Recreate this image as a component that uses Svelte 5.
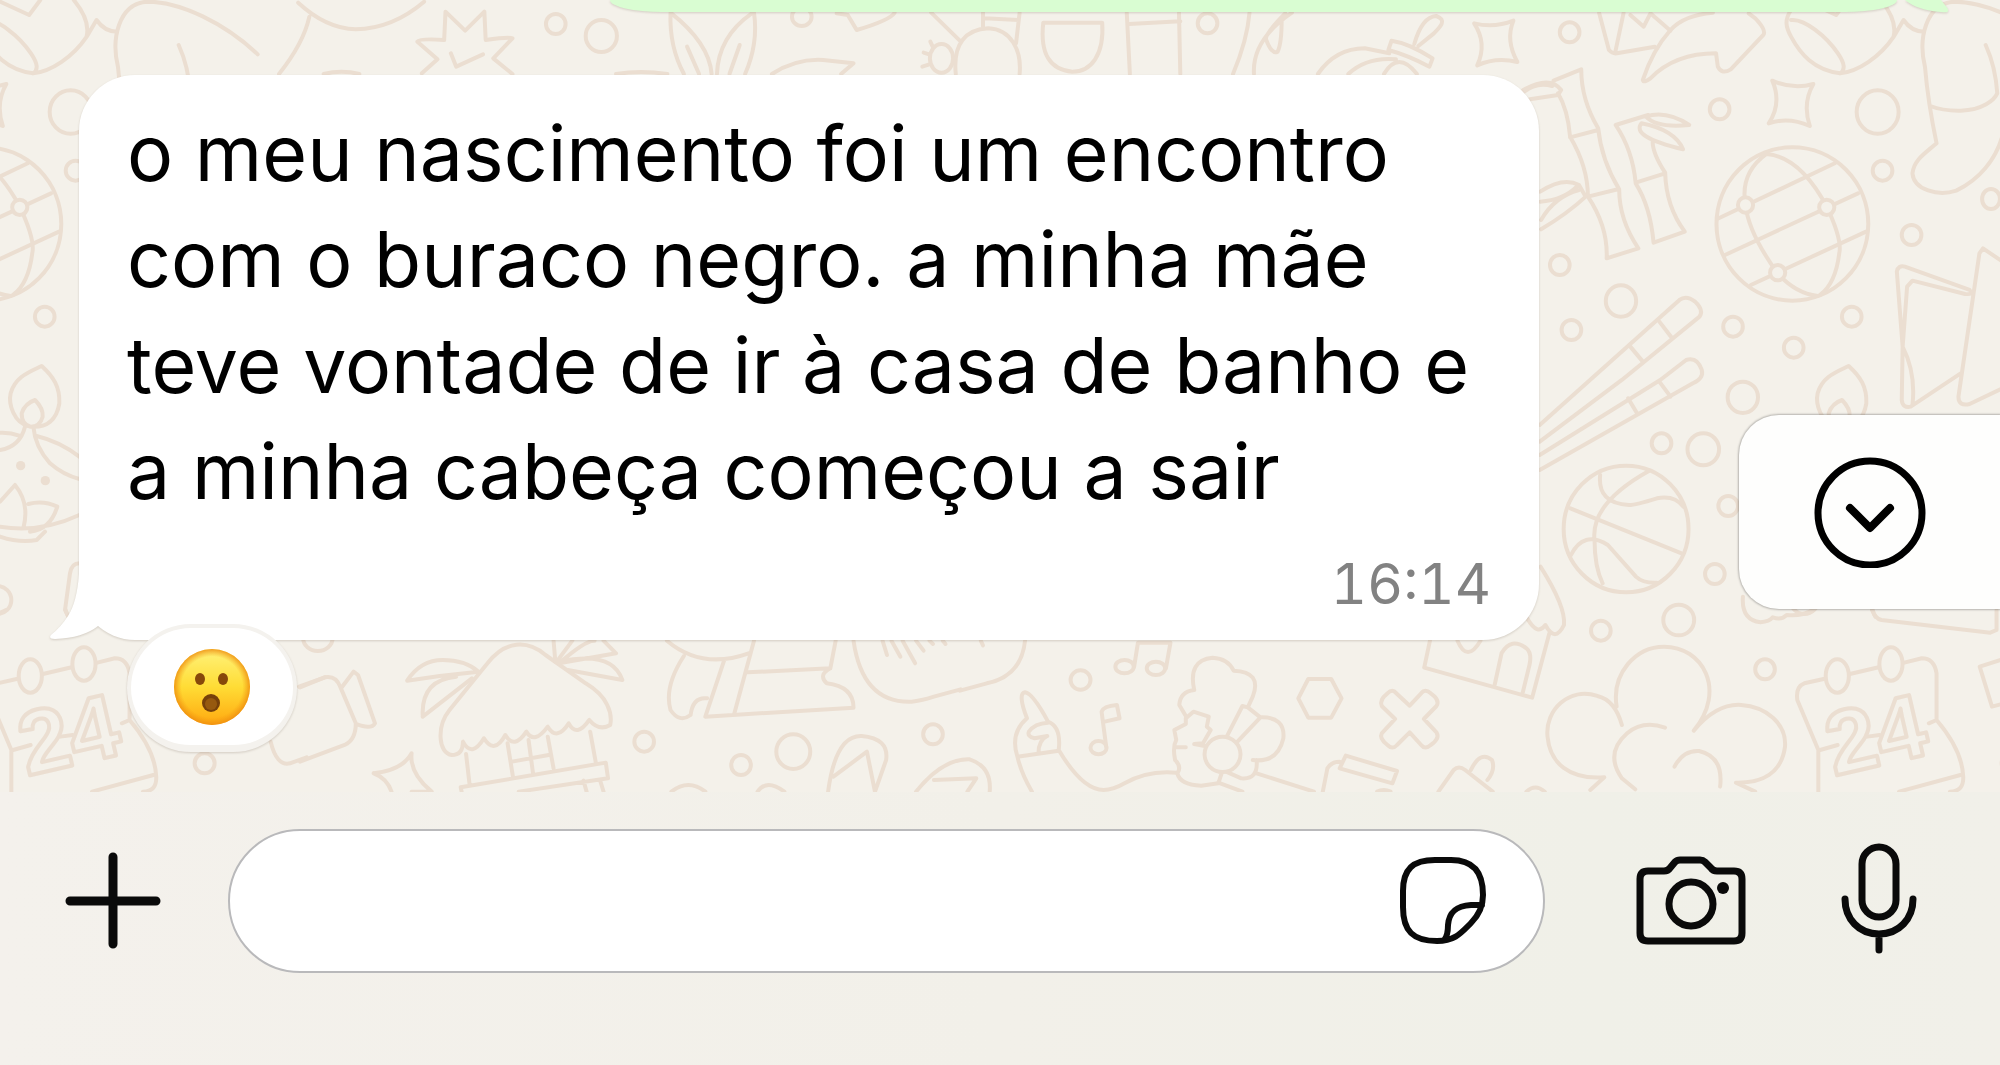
<script>
  let message = $state('')

  const incoming = {
    text: 'o meu nascimento foi um encontro com o buraco negro. a minha mãe teve vontade de ir à casa de banho e a minha cabeça começou a sair',
    time: '16:14'
  }

  // Width of one wallpaper tile
  const tile = 1807
</script>

<main>
  <section class="chat">
    <svg class="wallpaper" viewBox="0 0 2000 792" preserveAspectRatio="xMinYMin slice" aria-hidden="true">
      <defs>
        <g id="doodles">
          <!-- hat and starburst -->
          <g transform="scale(.4464 .3333)">
            <path d="M668 8Q730 85 797 88Q880 85 950 5M693 50Q680 130 625 222" />
            <path d="M945 220L980 178L935 125Q940 115 995 120L998 35L1042 92L1085 35L1088 120Q1140 110 1148 115L1105 175L1148 222M1010 160L1022 200L1082 163" />
            <path d="M725 222Q765 208 805 222M1380 222Q1435 210 1495 222" />
            <ellipse cx="1245" cy="72" rx="22" ry="30" />
            <ellipse cx="1347" cy="108" rx="35" ry="48" />
          </g>

          <!-- leaves, ladybird, cup -->
          <g transform="translate(600) scale(.4464 .3333)">
            <path d="M158 38Q155 140 188 222M158 38Q245 130 250 222M345 38Q355 130 325 222M340 40Q265 110 262 222M195 140L222 222M313 135L290 222" />
            <ellipse cx="452" cy="50" rx="22" ry="28" />
            <path d="M530 40L555 45L575 90Q650 60 660 38M385 222Q440 175 500 180L568 190L540 222" />
            <path d="M742 38L806 122M858 38V80M940 38L932 130M862 55L938 60M797 222C790 130 820 88 870 85C920 88 945 150 940 222" />
            <ellipse cx="765" cy="175" rx="26" ry="43" />
            <path d="M740 125l5 14M725 158l14 6M722 200l14 -6" />
            <path d="M993 68H1125C1130 165 1100 215 1058 215C1010 210 985 165 993 68Z" />
            <path d="M1180 38L1187 222M1297 38L1300 222M1185 72L1300 64" />
            <ellipse cx="1361" cy="70" rx="22" ry="30" />
            <path d="M1455 38Q1450 120 1418 222M1550 38Q1460 120 1465 222M1535 40Q1490 100 1492 118Q1505 165 1518 155Q1527 130 1527 60" />
          </g>

          <!-- ornament, bird, bamboo, globe, stocking, cards -->
          <g transform="translate(1300) scale(.4464 .3333)">
            <path d="M40 222Q80 145 145 145L200 160M108 222Q150 170 215 178M188 222Q220 150 262 222M205 122Q245 130 297 175L290 200Q240 165 198 150ZM256 132C265 90 280 50 305 48C330 60 315 80 300 100L265 138" />
            <path d="M390 70Q435 85 478 62Q460 120 487 186Q440 170 397 196Q420 130 390 70Z" />
            <path d="M1058 242Q1105 270 1150 252Q1125 310 1142 378Q1095 350 1050 370Q1080 310 1058 242Z" />
            <path d="M670 38L692 150Q700 162 710 160L795 140M725 38L706 158M740 45L770 80L785 40L830 92" />
            <path d="M925 38Q860 45 830 90Q790 150 768 240Q770 250 785 235Q840 160 932 160L936 200Q945 225 965 208L1038 105Q1045 90 1020 55L1005 40" />
            <path d="M1100 30C1085 60 1088 80 1100 110C1120 160 1150 210 1210 220C1250 215 1300 170 1330 110L1352 60Q1370 95 1398 95M1100 60C1130 55 1180 110 1205 160Q1228 205 1210 220M1301 0Q1338 60 1330 108M1136 5L1201 45L1226 0" />
            <path d="M1713 163C1640 70 1540 5 1466 5C1400 10 1385 120 1400 200C1405 280 1415 360 1426 430C1400 460 1375 480 1372 520C1375 570 1430 590 1470 572C1520 540 1560 480 1575 400M1536 135Q1558 200 1562 280C1555 300 1530 330 1480 332Q1440 333 1412 318" />
            <path d="M568 242L630 208Q630 300 668 385Q675 480 715 568Q715 660 758 745L687 775Q690 680 645 590Q645 500 605 410Q600 330 578 280M605 412L668 390M645 590L712 568" />
            <path d="M500 270Q560 225 585 270L578 285L515 298M502 275Q530 245 565 258M538 575Q590 530 625 555L640 590Q600 640 540 688M538 605Q590 600 620 560M540 660Q570 590 625 570" />
            <path d="M780 345L707 375Q745 450 752 550Q785 620 792 728L862 695Q820 620 818 518Q790 460 790 425M752 548L818 520M775 350Q820 330 872 375Q800 385 775 350M765 370Q740 410 858 448Q840 390 765 370Z" />
            <path d="M537 1275L850 900Q865 885 885 905Q905 930 895 950L721 1140L537 1325M805 965L832 1012M740 1040L768 1085" />
            <path d="M537 1365L807 1140L865 1080Q890 1070 900 1110Q905 1135 880 1150L537 1410M805 1145L830 1190M735 1195L755 1240" />
            <ellipse cx="1103" cy="672" rx="170" ry="230" />
            <path d="M938 655L1198 490M952 765L1250 580M1010 855L1268 695M1045 462Q985 520 998 615Q1005 700 1070 820Q1110 880 1160 888M1045 462Q1120 470 1180 620Q1215 720 1208 760Q1200 850 1165 885" />
            <g class="node">
              <ellipse cx="998" cy="615" rx="17" ry="23" />
              <ellipse cx="1180" cy="622" rx="17" ry="23" />
              <ellipse cx="1070" cy="818" rx="17" ry="23" />
            </g>
            <path d="M1350 1040L1337 815Q1340 795 1355 800L1500 870Q1510 885 1490 882L1372 842L1360 860L1350 1040L1348 1200Q1350 1225 1368 1220L1480 1120M1350 1040Q1380 1120 1372 1215M1590 800L1530 745L1522 760L1475 1190Q1475 1220 1500 1212L1590 1155" />
            <ellipse cx="604" cy="97" rx="22" ry="30" />
            <ellipse cx="940" cy="328" rx="22" ry="30" />
            <ellipse cx="1294" cy="336" rx="47" ry="65" />
            <ellipse cx="1305" cy="512" rx="22" ry="30" />
            <ellipse cx="1548" cy="597" rx="20" ry="30" />
            <ellipse cx="1370" cy="705" rx="22" ry="30" />
            <ellipse cx="582" cy="795" rx="22" ry="30" />
            <ellipse cx="719" cy="903" rx="34" ry="47" />
            <ellipse cx="608" cy="990" rx="22" ry="30" />
            <ellipse cx="970" cy="980" rx="22" ry="30" />
            <ellipse cx="1236" cy="950" rx="22" ry="30" />
            <ellipse cx="1106" cy="1043" rx="22" ry="30" />
            <ellipse cx="992" cy="1192" rx="34" ry="47" />
          </g>

          <!-- oil lamp -->
          <g transform="translate(0 280) scale(.3333)">
            <path d="M125 258C160 290 180 320 178 370C170 420 140 445 90 440C40 430 25 370 32 340C45 290 90 275 125 258ZM105 360Q130 385 128 410Q120 440 92 440Q65 435 65 400Q75 370 105 360Z" />
            <path d="M75 440Q60 500 0 510M100 440Q105 500 150 550Q190 585 238 597M-60 475Q0 445 60 468M110 468Q180 485 238 530M0 665L45 615Q90 670 70 745M85 672Q130 660 172 680Q150 750 90 755M0 740Q120 760 238 705M0 770Q60 790 110 780L135 755M238 850Q215 850 210 880L195 990L205 1010" />
            <circle class="dot" cx="62" cy="557" r="14" />
            <circle class="dot" cx="136" cy="602" r="14" />
            <circle cx="-8" cy="960" r="42" />
            <circle cx="614" cy="1450" r="30" />
            <path d="M897 1220L975 1192M812 1385Q830 1460 870 1450L920 1432" />
          </g>

          <!-- camcorder, hut, flip-flops -->
          <g transform="translate(300 600) scale(.4464 .3333)">
            <path d="M0 262L55 232Q80 225 90 260L125 370Q125 420 100 435L0 485M92 265L120 215L130 225L168 370Q160 390 125 372" />
            <ellipse cx="40" cy="115" rx="33" ry="38" />
            <path d="M165 520Q230 510 250 460Q245 520 295 575H250M165 520Q195 535 205 575" />
            <path d="M340 465C310 460 305 380 335 330L420 190C460 120 510 120 550 165L640 250C690 290 700 340 695 375Q670 395 648 360Q620 415 602 370Q575 425 555 380Q525 435 507 395Q480 450 460 405Q435 465 412 415Q385 475 365 425Q365 465 340 465Z" />
            <path d="M240 242Q270 180 320 180Q370 180 400 215Q320 225 240 242ZM275 350Q270 240 350 230M275 350L385 235M568 122L572 185M610 122L575 185M680 122L708 160L580 190Q640 120 660 122M580 185Q700 150 722 240L600 210" />
            <path d="M372 462L380 555M465 430L477 530M512 420L522 520M555 410L568 505M650 395L663 490M475 485L557 465M362 575L360 562L685 488L690 535L490 575M635 542L642 575M672 540L680 575" />
            <ellipse cx="771" cy="425" rx="22" ry="30" />
            <ellipse cx="988" cy="495" rx="22" ry="30" />
            <ellipse cx="1105" cy="455" rx="38" ry="52" />
            <ellipse cx="1418" cy="403" rx="22" ry="30" />
            <path d="M832 575Q870 535 908 575M1025 575Q1045 535 1085 575" />
            <path d="M822 122Q900 210 1005 160M860 168Q815 260 830 330Q850 370 875 345Q880 290 912 295M1017 122L972 345M950 182L908 350L1240 323Q1240 260 1180 250Q1160 225 1188 205L1200 122M1003 217L1188 205" />
            <path d="M1240 122Q1260 310 1370 305Q1390 303 1420 290L1480 268M1305 122L1315 165M1325 122L1345 170M1350 122L1378 190M1380 122L1397 152M1410 122l8 10M1440 122l6 10M1525 122l5 14" />
            <path d="M1183 575Q1200 405 1258 408Q1320 415 1313 480L1288 575M1195 530L1270 455L1288 575M1380 575Q1440 475 1500 478Q1550 500 1545 575M1420 540L1515 535L1495 575" />
          </g>

          <!-- hand, notes, girl with a bow, hexagon, cross -->
          <g transform="translate(960 600) scale(.3827 .3333)">
            <path d="M170 122Q160 230 70 250L0 272" />
            <ellipse cx="315" cy="240" rx="26" ry="29" />
            <path d="M455 200L465 128H550L538 205M382 440L370 335Q375 318 410 315L417 355L378 365" />
            <ellipse cx="430" cy="200" rx="24" ry="20" />
            <ellipse cx="512" cy="205" rx="24" ry="20" />
            <ellipse cx="362" cy="443" rx="21" ry="20" />
            <path d="M150 470Q130 400 175 355Q150 280 170 277Q190 280 230 365Q265 380 258 450Q320 570 375 570Q400 570 430 550Q490 510 565 518M188 575Q160 520 150 470L258 452M205 460Q205 420 228 408L195 415Q175 410 180 395Q195 370 230 368" />
            <path d="M612 270Q595 180 660 173Q700 175 715 212Q790 215 765 290L752 322M612 270Q575 275 573 315L592 352M752 322L785 352Q850 350 845 415Q830 490 765 480M775 480Q780 540 735 535L695 515M697 410L738 318L752 322M785 352L725 425M775 520L925 575M675 548L738 575" />
            <path d="M640 438L612 432L635 430L655 390L645 380L650 350L610 335L590 355V372L560 390L565 420Q555 440 562 480Q580 500 568 520Q575 555 630 557L675 550L685 515M560 442H590" />
            <ellipse class="node" cx="686" cy="463" rx="47" ry="53" />
            <path d="M910 237H970L997 295L970 353H910L884 295Z" />
            <path d="M1117 280Q1130 265 1140 280L1175 317L1205 280Q1215 265 1230 280Q1255 300 1245 318L1212 357L1245 397Q1255 415 1230 435Q1215 450 1205 435L1175 397L1142 435Q1130 450 1117 435Q1095 415 1102 400L1137 357L1102 318Q1095 300 1117 280Z" />
            <path d="M948 575L960 505Q970 485 992 485M1008 467L1142 513L1130 550L992 505ZM1090 575Q1107 565 1125 575M1250 575L1290 510Q1303 495 1320 510L1392 575M1335 510Q1360 450 1390 480Q1400 510 1378 540M1480 575Q1503 550 1528 575" />
            <path d="M1228 122L1213 203L1495 293L1540 100M1397 255L1415 160Q1440 110 1480 145Q1495 160 1488 195L1470 280M1300 122Q1325 190 1360 122" />
          </g>

          <!-- basketball, cloud, calendar -->
          <g transform="translate(1450 380) scale(.3508 .3333)">
            <path d="M258 560Q330 680 325 735Q300 790 272 735Q250 770 220 715" />
            <ellipse cx="502" cy="447" rx="178" ry="190" />
            <path d="M343 385L660 520M568 272Q400 370 412 480Q412 560 435 610M428 285Q420 370 510 375Q530 375 590 355Q640 345 665 380M345 525Q380 450 450 495L530 590Q550 610 590 608" />
            <ellipse cx="603" cy="190" rx="28" ry="30" />
            <ellipse cx="722" cy="208" rx="45" ry="48" />
            <ellipse cx="793" cy="378" rx="28" ry="30" />
            <ellipse cx="755" cy="582" rx="28" ry="30" />
            <ellipse cx="652" cy="720" rx="44" ry="46" />
            <ellipse cx="430" cy="752" rx="28" ry="30" />
            <ellipse cx="898" cy="868" rx="28" ry="30" />
            <path d="M490 1035Q470 960 420 948C340 920 270 990 278 1070C285 1150 340 1200 440 1192L400 1230M475 980C460 880 530 800 610 800C720 800 790 930 695 1052Q760 970 830 975C900 980 960 1030 955 1100C945 1180 890 1210 815 1208L870 1235M613 1043Q550 1020 505 1060Q440 1120 490 1195L528 1228M640 1160Q665 1110 710 1113Q780 1130 770 1220" />
            <path d="M835 650Q830 720 885 727Q910 725 920 712Q945 722 960 705Q1000 710 1035 690M1205 690Q1210 715 1230 720L1540 758L1558 750V690M1600 830L1510 860L1545 980L1600 965" />
            <path d="M1050 1235V1110L990 960Q985 920 1010 910L1065 897M1140 882L1222 862M1295 848L1345 835Q1380 835 1387 880V1020Q1460 1110 1463 1190Q1465 1235 1425 1235M1280 1235L1455 1185M1055 1110L1105 1095M1190 1070L1225 1065M1365 1030L1387 1020" />
            <ellipse cx="1104" cy="888" rx="33" ry="50" />
            <ellipse cx="1257" cy="852" rx="33" ry="50" />
          </g>
          <text x="1834" y="776" transform="rotate(-13 1834 776)">24</text>
        </g>
      </defs>
      <use href="#doodles" x={-tile} />
      <use href="#doodles" />
      <use href="#doodles" x={tile} />
    </svg>

    <div class="bubble outgoing">
      <svg class="tail" viewBox="0 0 60 14" aria-hidden="true">
        <path d="M8 0Q20 10 44 12Q56 14 48 5L44 0Z" />
      </svg>
    </div>

    <article class="bubble incoming">
      <svg class="tail" viewBox="0 0 62 80" aria-hidden="true">
        <path d="M30 0V14Q28 42 19 56Q12 67 2 75Q-1 79 6 79Q34 78 49 66L62 50V0Z" />
      </svg>
      <p>{incoming.text}</p>
      <time>{incoming.time}</time>
      <button class="reaction" aria-label="Reação">
        <svg viewBox="0 0 78 78" aria-hidden="true">
          <defs>
            <linearGradient id="skin" x2="0" y2="1">
              <stop offset="0" stop-color="#fff27a" />
              <stop offset=".5" stop-color="#ffdc35" />
              <stop offset="1" stop-color="#ffa80f" />
            </linearGradient>
            <radialGradient id="rim">
              <stop offset=".8" stop-color="#f39a12" stop-opacity="0" />
              <stop offset="1" stop-color="#ee8d10" stop-opacity=".85" />
            </radialGradient>
          </defs>
          <circle cx="39" cy="39" r="38" fill="url(#skin)" />
          <circle cx="39" cy="39" r="38" fill="url(#rim)" />
          <ellipse cx="27" cy="31" rx="5" ry="6" fill="#87480a" />
          <ellipse cx="50" cy="31" rx="5" ry="6" fill="#87480a" />
          <circle cx="38" cy="55" r="9" fill="#76400a" />
          <circle cx="38" cy="56" r="6" fill="#96590f" />
        </svg>
      </button>
    </article>

    <button class="scroll-down" aria-label="Ir para o fim">
      <svg viewBox="0 0 112 112" aria-hidden="true">
        <circle cx="56" cy="57" r="52" stroke-width="7" />
        <path d="M36 52L56 72L76 52" stroke-width="8" />
      </svg>
    </button>
  </section>

  <form class="composer" onsubmit={(e) => e.preventDefault()}>
    <button type="button" aria-label="Anexar">
      <svg width="98" height="98" viewBox="0 0 98 98" stroke-width="9" aria-hidden="true">
        <path d="M49 5V92M6 49H92" />
      </svg>
    </button>
    <div class="field">
      <input type="text" aria-label="Mensagem" bind:value={message} />
      <button type="button" aria-label="Figurinhas">
        <svg width="88" height="88" viewBox="0 0 88 88" stroke-width="6" aria-hidden="true">
          <path d="M36 3H52C74 3 84 15 84 38C84 50 80 58 72 66C62 76 56 84 38 84C14 84 4 74 4 50V34C4 12 14 3 36 3ZM83 48H72C56 49 50 56 49 68C49 76 48 80 45 83" />
        </svg>
      </button>
    </div>
    <button type="button" class="camera" aria-label="Câmara">
      <svg width="112" height="90" viewBox="0 0 112 90" stroke-width="7" aria-hidden="true">
        <path d="M13 15H29Q33 15 35 12L40 6Q42 4 45 4H65Q68 4 70 6L76 12Q78 15 82 15H99Q107 15 107 23V77Q107 85 99 85H13Q5 85 5 77V23Q5 15 13 15Z" />
        <circle cx="56" cy="48" r="22" />
        <circle class="flash" cx="88" cy="32" r="6" />
      </svg>
    </button>
    <button type="button" class="mic" aria-label="Gravar áudio">
      <svg width="76" height="116" viewBox="0 0 76 116" stroke-width="7" aria-hidden="true">
        <rect x="21" y="4" width="34" height="70" rx="17" />
        <path d="M4 56C4 76 18 91 38 91S72 76 72 56M38 91V107" />
      </svg>
    </button>
  </form>
</main>

<style>
  :global(body) {
    margin: 0;
    background: #f3f1ea;
  }

  main {
    display: flex;
    flex-direction: column;
    min-height: 100vh;
    font-family: Inter, "Liberation Sans", sans-serif;
    color: #000;
  }

  button {
    display: block;
    padding: 0;
    border: none;
    background: none;
    cursor: pointer;
  }

  button svg {
    display: block;
  }

  .chat {
    position: relative;
    display: flex;
    flex-direction: column;
    flex: 1;
    gap: 63px;
    padding: 0 0 152px 79px;
    box-sizing: border-box;
    overflow: hidden;
    background: #f4f1ea;
  }

  .wallpaper {
    position: absolute;
    inset: 0;
    width: 100%;
    height: 100%;
    fill: none;
    stroke: #ebded1;
    stroke-width: 4px;
    stroke-linecap: round;
    stroke-linejoin: round;
  }

  .wallpaper path,
  .wallpaper ellipse,
  .wallpaper circle {
    vector-effect: non-scaling-stroke;
  }

  .wallpaper .node {
    fill: #f4f1ea;
  }

  .wallpaper .dot {
    fill: #ebded1;
    stroke: none;
  }

  .wallpaper text {
    font: bold 90px "Liberation Sans", sans-serif;
  }

  .bubble {
    position: relative;
    filter: drop-shadow(0 1px 1px rgba(80, 60, 40, 0.2));
  }

  .tail {
    position: absolute;
  }

  .outgoing {
    align-self: flex-end;
    width: 67%;
    height: 12px;
    margin-right: 103px;
    border-radius: 0 0 52px 52px / 0 0 12px 12px;
    background: #d9fdd2;
  }

  .outgoing .tail {
    top: 0;
    left: 100%;
    width: 60px;
    height: 14px;
    fill: #d9fdd2;
  }

  .incoming {
    width: 76%;
    padding: 25px 48px 24px;
    box-sizing: border-box;
    border-radius: 56px;
    background: #fff;
  }

  .incoming .tail {
    bottom: 0;
    left: -30px;
    width: 62px;
    height: 80px;
    fill: #fff;
  }

  p {
    margin: 0 0 28px;
    font-size: 77px;
    line-height: 106px;
  }

  time {
    display: block;
    font-size: 56px;
    font-variant-numeric: tabular-nums;
    line-height: 64px;
    text-align: right;
    color: #828282;
  }

  .reaction {
    position: absolute;
    bottom: -112px;
    left: 48px;
    display: flex;
    align-items: center;
    justify-content: center;
    width: 170px;
    height: 128px;
    box-sizing: border-box;
    border: 4px solid #f4f2ee;
    border-bottom-width: 7px;
    border-radius: 64px;
    background: #fff;
  }

  .reaction svg {
    width: 78px;
    height: 78px;
  }

  .scroll-down {
    position: absolute;
    right: 0;
    bottom: 183px;
    width: 261px;
    height: 194px;
    border-radius: 40px 0 0 40px;
    background: #fefefd;
    box-shadow: 0 0 2px 1px rgba(0, 0, 0, 0.25);
  }

  .scroll-down svg {
    width: 112px;
    margin: 0 auto;
    fill: none;
    stroke: #000;
    stroke-linecap: round;
    stroke-linejoin: round;
  }

  .composer {
    display: flex;
    align-items: center;
    padding: 37px 83px 92px 64px;
    background: linear-gradient(90deg, #f4f1ec, #f2f0e9 50%, #f0f0e8 80%, #f1f0e9);
  }

  .composer svg {
    fill: none;
    stroke: #0a0a0a;
    stroke-linecap: round;
    stroke-linejoin: round;
  }

  .composer .flash {
    fill: #0a0a0a;
    stroke: none;
  }

  .field {
    display: flex;
    align-items: center;
    flex: 1;
    min-width: 0;
    height: 144px;
    margin-left: 66px;
    padding: 0 56px;
    box-sizing: border-box;
    border: 2px solid #b9b9bb;
    border-radius: 72px;
    background: #fff;
  }

  input {
    flex: 1;
    min-width: 0;
    border: none;
    outline: none;
    background: none;
    font: inherit;
    font-size: 77px;
  }

  .camera {
    margin-left: 90px;
  }

  .mic {
    margin-left: 94px;
  }
</style>
